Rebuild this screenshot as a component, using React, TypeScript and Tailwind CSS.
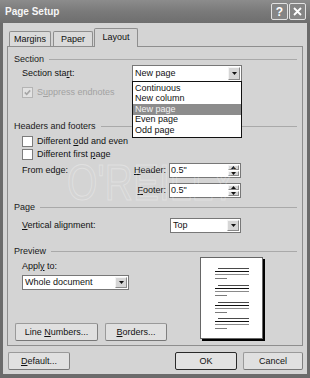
import React from "react";

const Arrow = () => (
  <div className="w-[12px] h-full flex-none bg-[#d6d6d6] border border-t-[#f4f4f4] border-l-[#f4f4f4] border-r-[#8a8a8a] border-b-[#8a8a8a] flex items-center justify-center">
    <svg width="5" height="3" viewBox="0 0 5 3">
      <path d="M0 0H5L2.5 3Z" fill="#111" />
    </svg>
  </div>
);

const Select = ({ cls, text, children }: { cls: string; text: string; children?: React.ReactNode }) => (
  <div className={`relative flex-none bg-white border border-[#777] flex items-stretch ${cls}`}>
    <span className="flex-1 pl-[2px] flex items-center text-[#111]">{text}</span>
    <div className="p-[1px] h-full">
      <Arrow />
    </div>
    {children}
  </div>
);

const Spin = () => (
  <div className="flex-none w-[13px] h-full p-[1px] flex flex-col gap-[1px]">
    <div className="flex-1 bg-[#d6d6d6] border border-t-[#f4f4f4] border-l-[#f4f4f4] border-r-[#8a8a8a] border-b-[#8a8a8a] flex items-center justify-center">
      <svg width="5" height="3" viewBox="0 0 5 3">
        <path d="M0 3H5L2.5 0Z" fill="#111" />
      </svg>
    </div>
    <div className="flex-1 bg-[#d6d6d6] border border-t-[#f4f4f4] border-l-[#f4f4f4] border-r-[#8a8a8a] border-b-[#8a8a8a] flex items-center justify-center">
      <svg width="5" height="3" viewBox="0 0 5 3">
        <path d="M0 0H5L2.5 3Z" fill="#111" />
      </svg>
    </div>
  </div>
);

const Input = ({ text }: { text: string }) => (
  <div className="flex-none w-[72px] h-[15px] bg-white border border-[#777] flex items-stretch">
    <span className="flex-1 pl-[1px] flex items-center text-[#111]">{text}</span>
    <Spin />
  </div>
);

const Check = ({ disabled, checked }: { disabled?: boolean; checked?: boolean }) => (
  <div
    className={
      disabled
        ? "flex-none w-[11px] h-[11px] border border-[#b4b4b4] bg-[#e2e2e2] flex items-center justify-center"
        : "flex-none w-[11px] h-[11px] border border-[#7c7c7c] bg-white flex items-center justify-center"
    }
  >
    {checked && (
      <svg width="7" height="7" viewBox="0 0 7 7">
        <path d="M0.8 3.4L2.7 5.3L6.2 1.4" stroke={disabled ? "#a6a6a6" : "#111"} strokeWidth="1.6" fill="none" />
      </svg>
    )}
  </div>
);

const GroupHead = ({ label, cls }: { label: string; cls: string }) => (
  <div className={`flex items-center h-[12px] pl-[6px] pr-[5px] ${cls}`}>
    <span className="text-[#1a1a1a]">{label}</span>
    <div className="flex-1 ml-[5px] h-px bg-[#a9a9a9]" />
  </div>
);

const Btn = ({ cls, children, def }: { cls: string; children: React.ReactNode; def?: boolean }) => (
  <div
    className={
      def
        ? `flex-none h-[18px] rounded-[2px] border border-[#2a2a2a] bg-[#e2e2e2] flex items-center justify-center text-[#111] ${cls}`
        : `flex-none h-[18px] rounded-[2px] border border-[#9a9a9a] border-b-[#777] border-r-[#808080] bg-[#e0e0e0] flex items-center justify-center text-[#111] ${cls}`
    }
  >
    <span>{children}</span>
  </div>
);

const PreviewPage = () => {
  const groups = [11, 28, 45, 61];
  return (
    <svg width="66" height="85" viewBox="0 0 66 85" className="flex-none">
      <rect x="0.5" y="0.5" width="62" height="81" fill="#fff" stroke="#666" />
      <rect x="63" y="2" width="2" height="82" fill="#000" />
      <rect x="2" y="82" width="63" height="2" fill="#000" />
      {groups.map((g) => (
        <g key={g}>
          <rect x="18" y={g} width="31" height="1" fill="#4a4a4a" />
          <rect x="15" y={g + 3} width="34" height="1" fill="#111" />
          <rect x="15" y={g + 6} width="34" height="1" fill="#8a8a8a" />
          <rect x="15" y={g + 10} width="12" height="1" fill="#7a7a7a" />
        </g>
      ))}
    </svg>
  );
};

export default function App() {
  return (
    <div className="w-[310px] h-[378px] bg-[#6b6b6b] flex flex-col overflow-hidden font-['Liberation_Sans',Arial,sans-serif] text-[9px] leading-none">
      {/* Title bar */}
      <div className="h-[23px] flex-none flex items-center pl-[5px] pr-[4px] bg-gradient-to-b from-[#8c8c8c] via-[#7a7a7a] to-[#6e6e6e]">
        <span className="text-[10px] font-bold text-[#f6f6f6]">Page Setup</span>
        <div className="ml-auto flex gap-[1px]">
          <div className="w-[17px] h-[17px] rounded-[2px] border border-[#e2e2e2] bg-[#858585] flex items-center justify-center text-white font-bold text-[12px]">
            ?
          </div>
          <div className="w-[17px] h-[17px] rounded-[2px] border border-[#e2e2e2] bg-[#858585] flex items-center justify-center">
            <svg width="9" height="9" viewBox="0 0 9 9">
              <path d="M1 1L8 8M8 1L1 8" stroke="#fff" strokeWidth="1.8" />
            </svg>
          </div>
        </div>
      </div>

      {/* Body */}
      <div className="mx-[3px] mb-[4px] flex-1 bg-[#d4d4d4] flex flex-col pt-[5px] pl-[4px] pr-[4px] pb-[4px]">
        {/* Tabs */}
        <div className="h-[18px] flex items-end pl-[2px] relative z-10">
          <div className="w-[42px] h-[15px] rounded-t-[2px] border border-b-0 border-[#8e8e8e] bg-[#dadada] flex items-center justify-center text-[#111]">
            Margins
          </div>
          <div className="ml-[2px] w-[40px] h-[15px] rounded-t-[2px] border border-b-0 border-[#8e8e8e] bg-[#dadada] flex items-center justify-center text-[#111]">
            Paper
          </div>
          <div className="ml-[1px] w-[44px] h-[19px] -mb-px rounded-t-[2px] border border-b-0 border-[#8e8e8e] bg-[#d4d4d4] flex items-center justify-center text-[#111] pb-[1px]">
            Layout
          </div>
        </div>

        {/* Panel */}
        <div className="relative h-[300px] border border-[#8e8e8e] bg-[#d4d4d4] flex flex-col">
          {/* watermark */}
          <div className="absolute left-[59px] top-[111px] origin-left scale-x-[0.78] text-[50px] leading-none text-transparent [-webkit-text-stroke:1px_rgba(255,255,255,0.3)] pointer-events-none">
            O'REILLY
          </div>

          <GroupHead label="Section" cls="mt-[6px]" />
          <div className="relative z-20 h-[17px] flex items-center pl-[14px] pr-[60px]">
            <span className="flex-1 text-[#111]">
              Section sta<u>r</u>t:
            </span>
            <Select cls="w-[110px] h-[17px]" text="New page">
              <div className="absolute -left-px -right-px top-full bg-white border border-[#111] pt-[1px] pb-[1px] flex flex-col">
                <div className="h-[10.5px] pl-[2px] flex items-center text-[#111]">Continuous</div>
                <div className="h-[10.5px] pl-[2px] flex items-center text-[#111]">New column</div>
                <div className="h-[10.5px] pl-[2px] flex items-center bg-[#8c8c8c] text-[#f2f2f2]">New page</div>
                <div className="h-[10.5px] pl-[2px] flex items-center text-[#111]">Even page</div>
                <div className="h-[10.5px] pl-[2px] flex items-center text-[#111]">Odd page</div>
              </div>
            </Select>
          </div>
          <div className="mt-[4px] h-[12px] flex items-center pl-[14px]">
            <Check disabled checked />
            <span className="ml-[4px] text-[#a2a2a2]">
              S<u>u</u>ppress endnotes
            </span>
          </div>

          <GroupHead label="Headers and footers" cls="mt-[22px]" />
          <div className="mt-[3px] h-[12px] flex items-center pl-[14px]">
            <Check />
            <span className="ml-[4px] text-[#111]">
              Different <u>o</u>dd and even
            </span>
          </div>
          <div className="mt-[1px] h-[12px] flex items-center pl-[14px]">
            <Check />
            <span className="ml-[4px] text-[#111]">
              Different first <u>p</u>age
            </span>
          </div>
          <div className="mt-[3px] h-[15px] flex items-center pl-[14px] pr-[61px]">
            <span className="flex-1 text-[#111]">From edge:</span>
            <span className="mr-[3px] text-[#111]">
              <u>H</u>eader:
            </span>
            <Input text={'0.5"'} />
          </div>
          <div className="mt-[5px] h-[15px] flex items-center pl-[14px] pr-[61px]">
            <span className="flex-1" />
            <span className="mr-[3px] text-[#111]">
              <u>F</u>ooter:
            </span>
            <Input text={'0.5"'} />
          </div>

          <GroupHead label="Page" cls="mt-[3px]" />
          <div className="mt-[5px] h-[15px] flex items-center pl-[14px] pr-[61px]">
            <span className="flex-1 text-[#111]">
              <u>V</u>ertical alignment:
            </span>
            <Select cls="w-[71px] h-[15px]" text="Top" />
          </div>

          <GroupHead label="Preview" cls="mt-[12px]" />
          <div className="h-[84px] flex">
            <div className="w-[192px] flex-none flex flex-col pl-[7px]">
              <div className="mt-[3px] h-[12px] pl-[7px] flex items-center text-[#111]">
                <span>
                  Appl<u>y</u> to:
                </span>
              </div>
              <div className="mt-[3px] pl-[7px] flex">
                <Select cls="w-[107px] h-[15px]" text="Whole document" />
              </div>
              <div className="mt-auto flex">
                <Btn cls="w-[83px]">
                  Line <u>N</u>umbers...
                </Btn>
                <Btn cls="ml-[7px] w-[62px]">
                  <u>B</u>orders...
                </Btn>
              </div>
            </div>
            <PreviewPage />
          </div>
        </div>

        {/* Dialog buttons */}
        <div className="mt-[6px] h-[18px] flex pl-[1px]">
          <Btn cls="w-[62px]">
            <u>D</u>efault...
          </Btn>
          <Btn def cls="ml-auto w-[62px]">
            OK
          </Btn>
          <Btn cls="ml-[6px] w-[60px]">Cancel</Btn>
        </div>
      </div>
    </div>
  );
}
